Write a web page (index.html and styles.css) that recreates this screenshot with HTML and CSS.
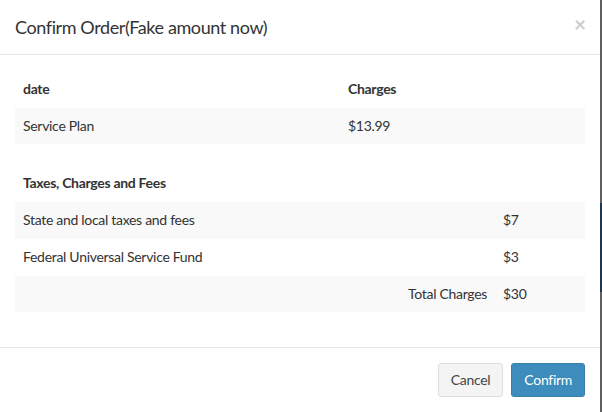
FILE: index.html
```html
<!DOCTYPE html>
<html>
<head>
<meta charset="utf-8">
<link rel="stylesheet" href="styles.css">
</head>
<body>
<div class="page">
  <div class="modal">
    <div class="modal-header">
      <h4 class="modal-title">Confirm Order(Fake amount now)</h4>
      <span class="close">×</span>
    </div>
    <div class="modal-body">
      <table class="tbl tbl-plan">
        <thead>
          <tr><th class="c1">date</th><th class="c2">Charges</th></tr>
        </thead>
        <tbody>
          <tr class="odd"><td>Service Plan</td><td>$13.99</td></tr>
        </tbody>
      </table>
      <table class="tbl tbl-tax">
        <thead>
          <tr><th class="c1">Taxes, Charges and Fees</th><th class="c2"></th></tr>
        </thead>
        <tbody>
          <tr class="odd"><td>State and local taxes and fees</td><td>$7</td></tr>
          <tr><td>Federal Universal Service Fund</td><td>$3</td></tr>
          <tr class="odd"><td class="right">Total Charges</td><td>$30</td></tr>
        </tbody>
      </table>
    </div>
    <div class="modal-footer">
      <button class="btn btn-default">Cancel</button>
      <button class="btn btn-primary">Confirm</button>
    </div>
  </div>
  <div class="backdrop-strip"></div>
</div>
</body>
</html>
```

FILE: styles.css
```css
* { box-sizing: border-box; }
html, body { margin: 0; padding: 0; }
body {
  font-family: Lato, "Open Sans", "Liberation Sans", sans-serif;
  font-size: 14px;
  line-height: 1.42857;
  letter-spacing: -0.3px;
  color: #333;
  background: #fff;
}
.page {
  display: flex;
  width: 602px;
  height: 412px;
  overflow: hidden;
}
.modal {
  width: 600px;
  flex: none;
  background: #fff;
  display: flex;
  flex-direction: column;
}
.backdrop-strip {
  width: 2px;
  flex: none;
  background: linear-gradient(to bottom, #5f5f5f 0, #5f5f5f 203px, #1f3650 203px, #1f3650 292px, #5f5f5f 292px, #5f5f5f 100%);
}
.modal-header {
  display: flex;
  align-items: flex-start;
  justify-content: space-between;
  padding: 15px;
  border-bottom: 1px solid #e5e5e5;
}
.modal-title {
  margin: 0;
  font-size: 18px;
  font-weight: 400;
  line-height: 24px;
  letter-spacing: -0.4px;
  color: #333;
}
.close {
  font-size: 21px;
  font-weight: 700;
  line-height: 1;
  color: #000;
  opacity: 0.2;
  margin-top: -2px;
  margin-right: -1px;
}
.modal-body {
  padding: 15px;
}
.tbl {
  width: 100%;
  border-collapse: collapse;
  border-spacing: 0;
  margin-bottom: 20px;
}
.tbl th, .tbl td {
  padding: 8px;
  line-height: 20px;
  text-align: left;
  vertical-align: top;
  border-top: 1px solid transparent;
}
.tbl th { font-weight: 700; }
.tbl tr.odd td { background: #f9f9f9; }
.tbl-plan .c1 { width: 325px; }
.tbl-tax .c1 { width: 480px; }
.tbl td.right { text-align: right; }
.modal-footer {
  display: flex;
  justify-content: flex-end;
  gap: 8px;
  padding: 15px;
  border-top: 1px solid #e5e5e5;
}
.btn {
  font-family: inherit;
  font-size: 14px;
  line-height: 20px;
  letter-spacing: -0.3px;
  padding: 6px 12px;
  border-radius: 3px;
  border: 1px solid transparent;
  margin: 0;
}
.btn-default {
  background: #f4f4f4;
  border-color: #ddd;
  color: #444;
}
.btn-primary {
  background: #3c8dbc;
  border-color: #367fa9;
  color: #fff;
}
```
